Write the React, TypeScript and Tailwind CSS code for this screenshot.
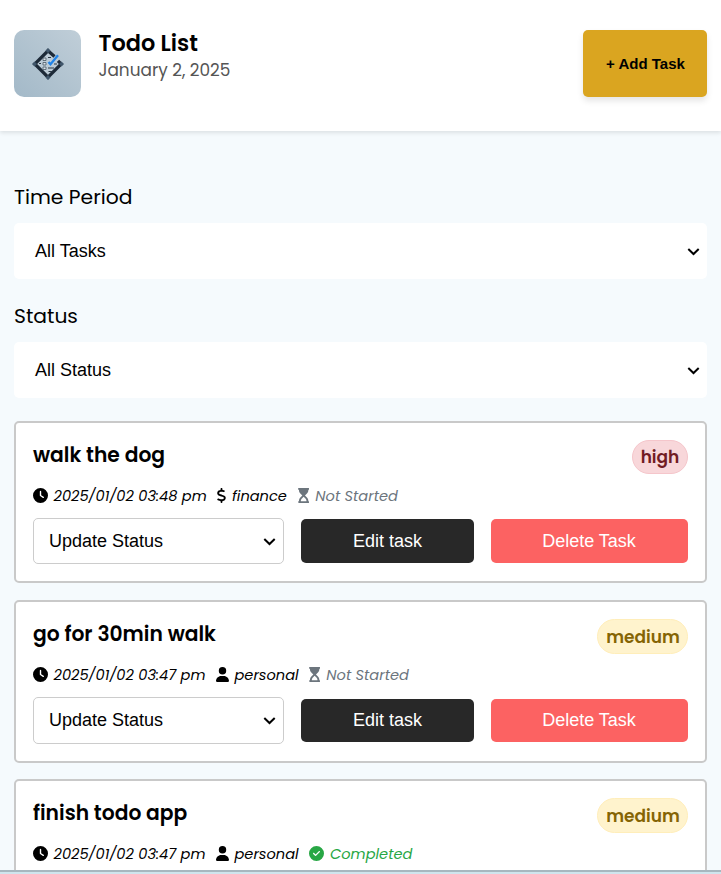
import type { ReactNode } from "react";
import { FaCircleCheck, FaClock, FaDollarSign, FaHourglassStart, FaUser } from "react-icons/fa6";

const poppins = "font-[Poppins,sans-serif]";
const arial = "font-['Liberation_Sans',Arial,sans-serif]";

function Chevron() {
  return (
    <svg width="14" height="9" viewBox="0 0 14 9" fill="none" className="shrink-0">
      <path d="M1.300 2 6.500 7 11.700 2" stroke="#000" strokeWidth="2" />
    </svg>
  );
}

function Logo() {
  return (
    <div className="flex size-[67px] items-center justify-center rounded-[10px] bg-linear-to-tr from-[#a3b9c8] to-[#c0ced8]">
      <svg width="34" height="34" viewBox="0 0 34 34" fill="none">
        <path d="M17 2.800 31.200 17 17 31.200 2.800 17Z" fill="#bccbd6" />
        <path d="M23.500 9.500 17 3.800 3.800 17 17 30.200 30.200 17 27 13.800" stroke="#1d2a38" strokeWidth="3.200" />
        <path d="m17 1 2.500 2.500-2.500 2.500-2.500-2.500ZM17 28l2.500 2.500-2.500 2.500-2.500-2.500ZM1 17l2.500-2.500 2.500 2.500-2.500 2.500ZM28 17l2.500-2.500 2.500 2.500-2.500 2.500Z" fill="#40566b" />
        <path d="M12 11h3v2.500h-3ZM12 15.500h3v2.500h-3ZM12 20h3v2.500h-3Z" fill="#dbe3e9" stroke="#4a5864" strokeWidth="0.800" />
        <path d="M17 10.500h3M17 21h6M17.500 24.500h4M8 16.500h2M23 17h3" stroke="#2b3845" strokeWidth="1.200" />
        <path d="m17.500 15 2 2.300 7.500-9" stroke="#2184e8" strokeWidth="2.300" />
      </svg>
    </div>
  );
}

function Filter({ label, value }: { label: string; value: string }) {
  return (
    <div className="flex flex-col">
      <label className={`${poppins} h-[52px] text-[20.3px] leading-[53px]`}>{label}</label>
      <button className={`${arial} flex h-14 items-center justify-between rounded-[5px] bg-white pr-1.5 pl-[21px] text-[18px]`}>
        {value}
        <Chevron />
      </button>
    </div>
  );
}

function Meta({ icon, text, className }: { icon: ReactNode; text: string; className: string }) {
  return (
    <span className={`flex items-center ${className}`}>
      <span className="mb-0.5">{icon}</span>
      <span>{text}</span>
    </span>
  );
}

interface Task {
  title: string;
  date: string;
  category: "finance" | "personal";
  status: "Not Started" | "Completed";
  priority: "high" | "medium";
  cardStyle: string;
  selectStyle: string;
  buttonStyle: string;
}

const tasks: Task[] = [
  { title: "walk the dog", date: "2025/01/02 03:48 pm", category: "finance", status: "Not Started", priority: "high", cardStyle: "h-[162px] mb-[17px]", selectStyle: "h-[46px]", buttonStyle: "h-11" },
  { title: "go for 30min walk", date: "2025/01/02 03:47 pm", category: "personal", status: "Not Started", priority: "medium", cardStyle: "h-[163px] mb-4", selectStyle: "h-[47px] pb-px", buttonStyle: "h-[43px] pb-px" },
  { title: "finish todo app", date: "2025/01/02 03:47 pm", category: "personal", status: "Completed", priority: "medium", cardStyle: "h-[163px]", selectStyle: "", buttonStyle: "" },
];

function TaskCard({ task }: { task: Task }) {
  const badge =
    task.priority === "high"
      ? "h-[34px] w-14 border-[#f5c6cb] bg-[#f8d7da] text-[#721c24]"
      : "h-[35px] w-[91px] border-[#ffeeba] bg-[#fff3cd] pl-px text-[#856404]";
  return (
    <article className={`${task.cardStyle} shrink-0 rounded-[5px] border-2 border-[#c9c9c9] bg-white px-[17px] pt-[17px]`}>
      <div className="flex h-[35px] items-start justify-between">
        <h2 className={`${poppins} text-[20.25px] leading-[31px] font-semibold`}>{task.title}</h2>
        <span className={`${poppins} ${badge} flex items-center justify-center rounded-[18px] border pt-0.5 text-[17px] font-semibold`}>
          {task.priority}
        </span>
      </div>
      <div className={`${poppins} flex h-[43px] items-center text-[14.6px] italic`}>
        <Meta className="w-[183px] gap-[5.500px]" icon={<FaClock size={15} />} text={task.date} />
        {task.category === "finance" ? (
          <Meta className="w-[82px] gap-[5px]" icon={<FaDollarSign size={15} className="w-[11px]" />} text="finance" />
        ) : (
          <Meta className="w-[93px] gap-[5.500px]" icon={<FaUser size={15} className="w-[13px]" />} text="personal" />
        )}
        {task.status === "Completed" ? (
          <Meta className="gap-[6px] text-[#28a745]" icon={<FaCircleCheck size={15} />} text="Completed" />
        ) : (
          <Meta className="gap-[6px] text-[#6c757d]" icon={<FaHourglassStart size={15} className="w-[11.300px]" />} text="Not Started" />
        )}
      </div>
      {task.status !== "Completed" && (
        <div className={`${arial} flex items-center gap-[17px] text-[18px]`}>
          <button className={`${task.selectStyle} flex w-[251px] items-center justify-between rounded-[5px] border border-[#ccc] bg-white pr-[6px] pl-[15px]`}>
            Update Status
            <Chevron />
          </button>
          <button className={`${task.buttonStyle} w-[173px] rounded-[5px] bg-[#282828] text-white`}>Edit task</button>
          <button className={`${task.buttonStyle} flex-1 rounded-[5px] bg-[#fc6262] pr-px text-white`}>Delete Task</button>
        </div>
      )}
    </article>
  );
}

export default function App() {
  return (
    <div className="flex h-[874px] w-[721px] flex-col overflow-hidden bg-[#f5fafd] text-black">
      <header className="z-10 flex h-[131px] shrink-0 items-start justify-between bg-white px-3.5 pt-[30px] shadow-[0_2px_4px_rgba(0,0,0,0.1)]">
        <div className="flex gap-[17.500px]">
          <Logo />
          <div className={poppins}>
            <h1 className="text-[22.400px] leading-[27px] font-semibold">Todo List</h1>
            <p className="text-[16.900px] leading-[27px] text-[#555]">January 2, 2025</p>
          </div>
        </div>
        <button className={`${arial} h-[67px] w-[124px] rounded-[5px] bg-[#daa520] pt-px pl-px text-[15px] font-bold shadow-[0_4px_6px_rgba(0,0,0,0.1)]`}>
          + Add Task
        </button>
      </header>
      <main className="flex min-h-0 flex-1 flex-col overflow-hidden px-3.5 pt-10">
        <div className="mb-[23px] flex flex-col gap-[11px]">
          <Filter label="Time Period" value="All Tasks" />
          <Filter label="Status" value="All Status" />
        </div>
        {tasks.map((task) => (
          <TaskCard key={task.title} task={task} />
        ))}
      </main>
      <footer className="h-1 shrink-0 border-t-2 border-[#a7b7bf] bg-[#cfe5ed]" />
    </div>
  );
}
